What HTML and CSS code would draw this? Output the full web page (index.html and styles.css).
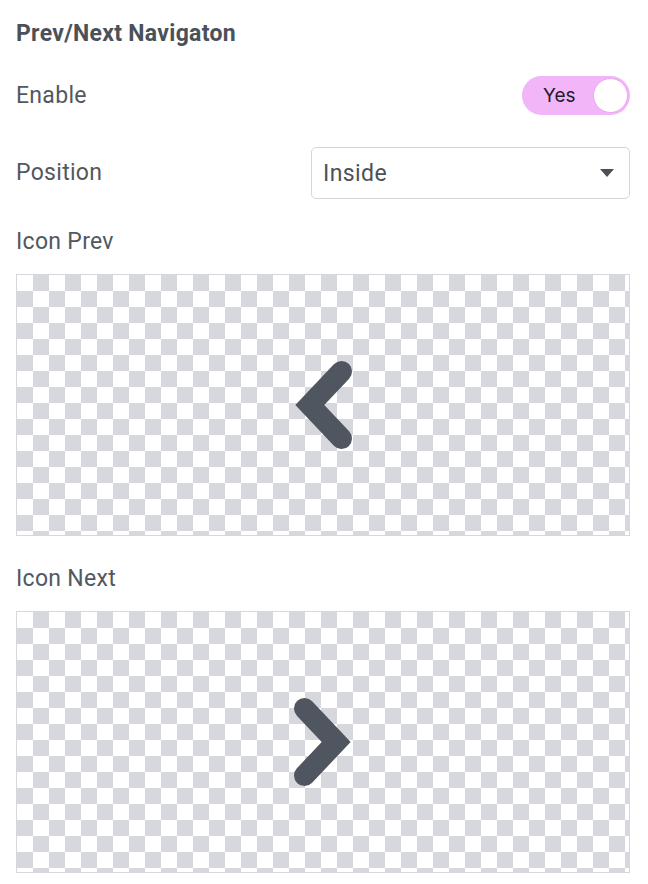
FILE: index.html
```html
<!DOCTYPE html>
<html lang="en">
<head>
  <meta charset="UTF-8">
  <meta name="viewport" content="width=device-width, initial-scale=1.0">
  <title>Prev/Next Navigation</title>
  <link rel="stylesheet" href="styles.css">
</head>
<body>
  <div class="panel">
    <h2 class="panel-title">Prev/Next Navigaton</h2>

    <div class="row row-enable">
      <span class="label">Enable</span>
      <label class="switch">
        <span class="switch-text">Yes</span>
        <span class="switch-knob"></span>
      </label>
    </div>

    <div class="row row-position">
      <span class="label">Position</span>
      <div class="select">
        <span class="select-value">Inside</span>
        <span class="select-arrow"></span>
      </div>
    </div>

    <div class="field">
      <span class="label">Icon Prev</span>
      <div class="icon-preview">
        <svg width="80" height="100" viewBox="0 0 80 100">
          <path d="M58.5 16.5 L26.8 50 L58.5 83.5" fill="none" stroke="#4f565f" stroke-width="21" stroke-linecap="round" stroke-linejoin="miter"/>
        </svg>
      </div>
    </div>

    <div class="field">
      <span class="label">Icon Next</span>
      <div class="icon-preview">
        <svg width="80" height="100" viewBox="0 0 80 100">
          <path d="M21.5 16.5 L53.2 50 L21.5 83.5" fill="none" stroke="#4f565f" stroke-width="21" stroke-linecap="round" stroke-linejoin="miter"/>
        </svg>
      </div>
    </div>
  </div>
</body>
</html>
```
FILE: styles.css
```css
body {
  margin: 0;
  font-family: Roboto, "Liberation Sans", Arial, sans-serif;
  background: #fff;
  color: #52585f;
}
.panel {
  padding: 21px 18px 0 16px;
}
.panel-title {
  margin: 0;
  font-size: 23px;
  font-weight: 700;
  line-height: 26px;
  letter-spacing: 0.3px;
  color: #4b5159;
}
.label {
  font-size: 23px;
  line-height: 26px;
  letter-spacing: 0.3px;
}
.row {
  display: flex;
  align-items: center;
  justify-content: space-between;
}
.row-enable {
  margin-top: 29px;
}
.row-position {
  margin-top: 32px;
}
.switch {
  width: 108px;
  height: 39px;
  box-sizing: border-box;
  border-radius: 20px;
  background: #f2b5f8;
  display: flex;
  align-items: center;
  justify-content: space-between;
  padding: 0 2px 0 21px;
}
.switch-text {
  font-family: Inter, Roboto, sans-serif;
  font-size: 19px;
  color: #1d1b2c;
}
.switch-knob {
  width: 35px;
  height: 35px;
  box-sizing: border-box;
  border-radius: 50%;
  background: #fff;
  border: 1px solid #e9a6f2;
}
.select {
  width: 319px;
  height: 52px;
  box-sizing: border-box;
  border: 1px solid #d4d6d9;
  border-radius: 5px;
  display: flex;
  align-items: center;
  justify-content: space-between;
  padding: 0 15px 0 11px;
}
.select-value {
  font-size: 23px;
  letter-spacing: 0.4px;
  color: #4b5159;
}
.select-arrow {
  width: 0;
  height: 0;
  border-left: 7px solid transparent;
  border-right: 7px solid transparent;
  border-top: 8px solid #4b5159;
}
.field {
  display: flex;
  flex-direction: column;
}
.field .label {
  margin-top: 30px;
}
.icon-preview {
  margin-top: 19px;
  height: 262px;
  box-sizing: border-box;
  border: 1px solid #d5d7dc;
  background-image: conic-gradient(#d6d8dd 25%, #fff 0 50%, #d6d8dd 0 75%, #fff 0);
  background-size: 32px 32px;
  background-origin: padding-box;
  display: flex;
  align-items: center;
  justify-content: center;
}
```
